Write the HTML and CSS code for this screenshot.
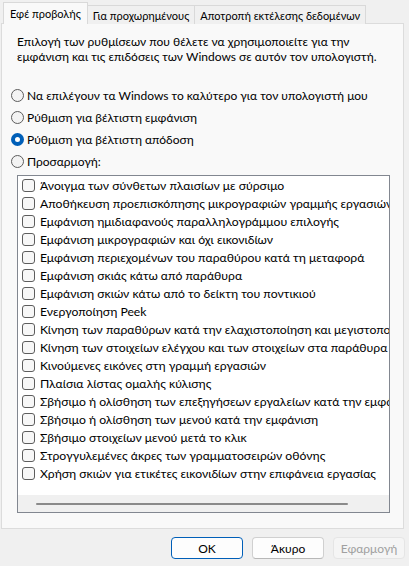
FILE: index.html
```html
<!DOCTYPE html>
<html lang="el">
<head>
<meta charset="utf-8">
<title>Επιλογές επιδόσεων</title>
<link rel="stylesheet" href="styles.css">
</head>
<body>
<div class="window">
  <div class="tabs">
    <div class="tab active">Εφέ προβολής</div>
    <div class="tab">Για προχωρημένους</div>
    <div class="tab">Αποτροπή εκτέλεσης δεδομένων</div>
  </div>
  <div class="panel">
    <p class="desc">Επιλογή των ρυθμίσεων που θέλετε να χρησιμοποιείτε για την<br>εμφάνιση και τις επιδόσεις των Windows σε αυτόν τον υπολογιστή.</p>
    <div class="radios">
      <div class="radio"><span class="rb"></span><span>Να επιλέγουν τα Windows το καλύτερο για τον υπολογιστή μου</span></div>
      <div class="radio"><span class="rb"></span><span>Ρύθμιση για βέλτιστη εμφάνιση</span></div>
      <div class="radio"><span class="rb checked"></span><span>Ρύθμιση για βέλτιστη απόδοση</span></div>
      <div class="radio"><span class="rb"></span><span>Προσαρμογή:</span></div>
    </div>
    <div class="listbox">
      <div class="items">
        <div class="item"><span class="cb"></span><span>Άνοιγμα των σύνθετων πλαισίων με σύρσιμο</span></div>
        <div class="item"><span class="cb"></span><span>Αποθήκευση προεπισκόπησης μικρογραφιών γραμμής εργασιών</span></div>
        <div class="item"><span class="cb"></span><span>Εμφάνιση ημιδιαφανούς παραλληλογράμμου επιλογής</span></div>
        <div class="item"><span class="cb"></span><span>Εμφάνιση μικρογραφιών και όχι εικονιδίων</span></div>
        <div class="item"><span class="cb"></span><span>Εμφάνιση περιεχομένων του παραθύρου κατά τη μεταφορά</span></div>
        <div class="item"><span class="cb"></span><span>Εμφάνιση σκιάς κάτω από παράθυρα</span></div>
        <div class="item"><span class="cb"></span><span>Εμφάνιση σκιών κάτω από το δείκτη του ποντικιού</span></div>
        <div class="item"><span class="cb"></span><span>Ενεργοποίηση Peek</span></div>
        <div class="item"><span class="cb"></span><span>Κίνηση των παραθύρων κατά την ελαχιστοποίηση και μεγιστοποίηση</span></div>
        <div class="item"><span class="cb"></span><span>Κίνηση των στοιχείων ελέγχου και των στοιχείων στα παράθυρα</span></div>
        <div class="item"><span class="cb"></span><span>Κινούμενες εικόνες στη γραμμή εργασιών</span></div>
        <div class="item"><span class="cb"></span><span>Πλαίσια λίστας ομαλής κύλισης</span></div>
        <div class="item"><span class="cb"></span><span>Σβήσιμο ή ολίσθηση των επεξηγήσεων εργαλείων κατά την εμφάνιση</span></div>
        <div class="item"><span class="cb"></span><span>Σβήσιμο ή ολίσθηση των μενού κατά την εμφάνιση</span></div>
        <div class="item"><span class="cb"></span><span>Σβήσιμο στοιχείων μενού μετά το κλικ</span></div>
        <div class="item"><span class="cb"></span><span>Στρογγυλεμένες άκρες των γραμματοσειρών οθόνης</span></div>
        <div class="item"><span class="cb"></span><span>Χρήση σκιών για ετικέτες εικονιδίων στην επιφάνεια εργασίας</span></div>
      </div>
      <div class="hscroll"><div class="thumb"></div></div>
    </div>
  </div>
  <div class="buttons">
    <button class="btn btn-default">OK</button>
    <button class="btn">Άκυρο</button>
    <button class="btn btn-disabled">Εφαρμογή</button>
  </div>
</div>
</body>
</html>
```
FILE: styles.css
```css
* { box-sizing: border-box; }
html, body {
  margin: 0;
  padding: 0;
  background: #f0f0f0;
}
body {
  font-family: Lato, "Noto Sans", sans-serif;
  font-size: 12px;
  color: #000;
  width: 409px;
  height: 566px;
  overflow: hidden;
}
.window {
  padding-top: 2px;
}
.tabs {
  display: flex;
  align-items: flex-end;
  padding-left: 3px;
  height: 22px;
  margin-bottom: -1px;
}
.tab {
  flex: none;
  height: 19px;
  padding: 1px 5px 0;
  border: 1px solid #d9d9d9;
  border-bottom: none;
  background: #f0f0f0;
  display: flex;
  align-items: center;
  white-space: nowrap;
  font-size: 11px;
  line-height: 15px;
}
.tab + .tab { border-left: none; }
.tab.active {
  height: 22px;
  background: #f9f9f9;
  position: relative;
  z-index: 1;
  padding: 0 6px 1px;
}
.panel {
  margin-left: 1px;
  width: 403px;
  height: 506px;
  border: 1px solid #dcdcdc;
  background: #f9f9f9;
  padding: 0;
}
.desc {
  margin: 10px 0 0 15px;
  line-height: 15px;
}
.radios {
  margin-top: 20px;
  padding-left: 9px;
}
.radio {
  height: 22px;
  display: flex;
  align-items: center;
  gap: 3px;
  white-space: nowrap;
}
.rb {
  width: 13px;
  height: 13px;
  border-radius: 50%;
  border: 1px solid #5d5d5d;
  background: #f3f3f3;
  flex: none;
}
.rb.checked {
  border: 4px solid #005fb8;
  background: #fff;
}
.listbox {
  margin: 3px 0 0 15px;
  width: 373px;
  height: 338px;
  border: 1px solid #828790;
  background: #fff;
  display: flex;
  flex-direction: column;
}
.items {
  flex: 1;
  overflow: hidden;
}
.item {
  height: 18px;
  display: flex;
  align-items: center;
  gap: 5px;
  padding-left: 4px;
  white-space: nowrap;
  font-size: 12.2px;
}
.cb {
  width: 13px;
  height: 13px;
  border: 1px solid #5d5d5d;
  border-radius: 3px;
  background: #f7f7f7;
  flex: none;
}
.hscroll {
  height: 17px;
  background: #f0f0f0;
  display: flex;
  align-items: center;
  flex: none;
}
.thumb {
  margin-left: 18px;
  width: 312px;
  height: 2px;
  border-radius: 1px;
  background: #8a8a8a;
}
.buttons {
  display: flex;
  justify-content: flex-end;
  gap: 9px;
  padding-right: 4px;
  margin-top: 8px;
}
.btn {
  width: 72px;
  height: 22px;
  font: inherit;
  color: #000;
  background: #fdfdfd;
  border: 1px solid #d0d0d0;
  border-bottom-color: #b8b8b8;
  border-radius: 4px;
  padding: 0;
}
.btn-default {
  border: 1px solid #005fb8;
}
.btn-disabled {
  background: #f5f5f5;
  border-color: #e5e5e5;
  color: #a0a0a0;
}
```
